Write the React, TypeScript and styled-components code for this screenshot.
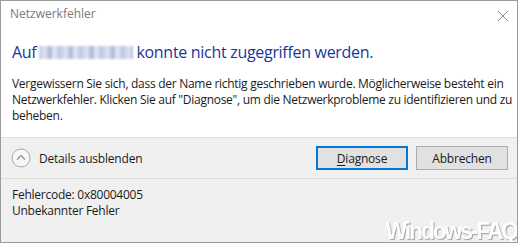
import React from 'react'
import styled, { createGlobalStyle } from 'styled-components'

const GlobalStyle = createGlobalStyle`
  body {
    margin: 0;
    background: #ffffff;
    font-family: 'Open Sans', 'Noto Sans', sans-serif;
  }
`

const Window = styled.div`
  position: relative;
  width: 518px;
  height: 243px;
  box-sizing: border-box;
  border: 1px solid #9b9b9b;
  display: flex;
  flex-direction: column;
  background: #ffffff;
  overflow: hidden;
`

const TitleBar = styled.div`
  display: flex;
  align-items: flex-start;
  justify-content: space-between;
  height: 30px;
  padding: 5px 8px 0 9px;
  box-sizing: border-box;
`

const Title = styled.span`
  font-size: 12px;
  line-height: 16px;
  color: #7a7a7a;
`

const CloseButton = styled.button`
  border: none;
  background: none;
  padding: 0;
  width: 12px;
  height: 12px;
  margin-top: 4px;
  display: flex;
`

const Content = styled.div`
  padding: 10px 11px 0 11px;
  height: 106px;
  box-sizing: border-box;
`

const Heading = styled.h1`
  margin: 0;
  font-size: 16px;
  line-height: 22px;
  font-weight: 400;
  color: #1a3798;
  letter-spacing: -0.3px;
`

const Blurred = styled.span`
  display: inline-block;
  width: 94px;
  height: 13px;
  margin: 0 3px;
  vertical-align: -1px;
  background: repeating-linear-gradient(
    90deg,
    #c3cbe2 0px,
    #dfe4f0 6px,
    #a9b5d6 11px,
    #e8ebf4 15px,
    #b8c2de 21px
  );
  filter: blur(1.2px);
`

const Message = styled.p`
  margin: 13px 0 0 0;
  font-size: 12px;
  line-height: 16px;
  color: #1b1b1b;
  letter-spacing: -0.28px;
  white-space: nowrap;
`

const Footer = styled.div`
  flex: 1;
  background: #f0f0f0;
  border-top: 1px solid #dfdfdf;
  display: flex;
  flex-direction: column;
`

const Toolbar = styled.div`
  height: 40px;
  display: flex;
  align-items: center;
  justify-content: space-between;
  padding: 0 9px 0 10px;
  border-bottom: 1px solid #dcdcdc;
`

const Toggle = styled.button`
  display: flex;
  align-items: center;
  gap: 8px;
  border: none;
  background: none;
  padding: 0;
  font-family: inherit;
  font-size: 12px;
  color: #1b1b1b;
  letter-spacing: -0.2px;
`

const Buttons = styled.div`
  display: flex;
  gap: 8px;
`

const DialogButton = styled.button<{ primary?: boolean }>`
  width: 92px;
  height: 24px;
  box-sizing: border-box;
  background: #e1e1e1;
  border: ${({ primary }) => (primary ? '2px solid #0078d7' : '1px solid #adadad')};
  font-family: inherit;
  font-size: 12px;
  color: #1b1b1b;
  padding: 0;
  letter-spacing: -0.2px;

  u {
    text-underline-offset: 2px;
  }
`

const Details = styled.div`
  padding: 8px 11px 0 11px;
  font-size: 12px;
  line-height: 16px;
  color: #1b1b1b;
  letter-spacing: -0.25px;
`

const Watermark = styled.span`
  position: absolute;
  right: 0;
  bottom: -1px;
  font-family: 'Liberation Sans', Arial, sans-serif;
  font-size: 23px;
  line-height: 24px;
  font-weight: 700;
  color: #ffffff;
  letter-spacing: -2.2px;
  text-shadow: 1px 1px 1px rgba(140, 140, 140, 0.9);
  opacity: 0.92;
`

const CloseIcon = () => (
  <svg width="12" height="12" viewBox="0 0 12 12">
    <path d="M1 1L11 11M11 1L1 11" stroke="#8a8a8a" strokeWidth="1" fill="none" />
  </svg>
)

const ChevronCircle = () => (
  <svg width="20" height="20" viewBox="0 0 20 20">
    <circle cx="10" cy="10" r="9" fill="#f7f7f7" stroke="#a8a8a8" strokeWidth="1" />
    <path d="M6 11.5L10 7.5L14 11.5" stroke="#8f8f8f" strokeWidth="1.2" fill="none" />
  </svg>
)

export default function App() {
  return (
    <>
      <GlobalStyle />
      <Window>
        <TitleBar>
          <Title>Netzwerkfehler</Title>
          <CloseButton aria-label="Schließen">
            <CloseIcon />
          </CloseButton>
        </TitleBar>
        <Content>
          <Heading>
            Auf<Blurred />konnte nicht zugegriffen werden.
          </Heading>
          <Message>
            Vergewissern Sie sich, dass der Name richtig geschrieben wurde. Möglicherweise besteht ein
            <br />
            Netzwerkfehler. Klicken Sie auf "Diagnose", um die Netzwerkprobleme zu identifizieren und zu
            <br />
            beheben.
          </Message>
        </Content>
        <Footer>
          <Toolbar>
            <Toggle>
              <ChevronCircle />
              Details ausblenden
            </Toggle>
            <Buttons>
              <DialogButton primary>
                <u>D</u>iagnose
              </DialogButton>
              <DialogButton>Abbrechen</DialogButton>
            </Buttons>
          </Toolbar>
          <Details>
            Fehlercode: 0x80004005
            <br />
            Unbekannter Fehler
          </Details>
        </Footer>
        <Watermark>Windows-FAQ</Watermark>
      </Window>
    </>
  )
}
